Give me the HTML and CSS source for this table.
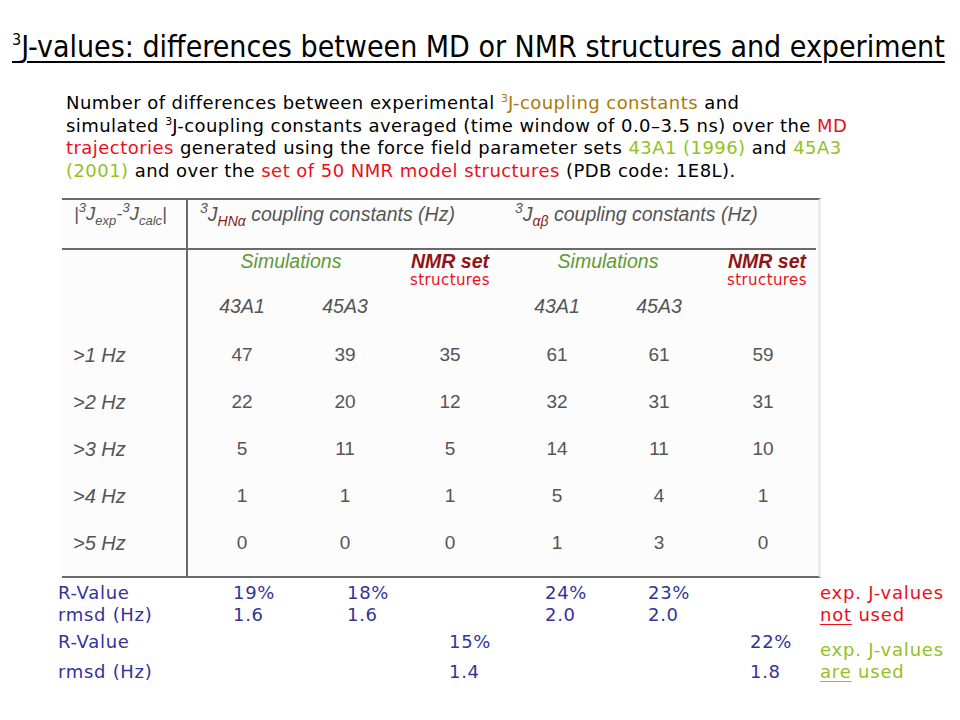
FILE: index.html
```html
<!DOCTYPE html>
<html>
<head>
<meta charset="utf-8">
<link rel="stylesheet" href="styles.css">
</head>
<body>
<div class="slide">
  <h1 class="title"><span class="title-text"><sup class="tsup">3</sup>J-values: differences between MD or NMR structures and experiment</span></h1>
  <p class="intro">Number of differences between experimental <span class="gold"><sup class="psup">3</sup>J-coupling constants</span> and<br>simulated <sup class="psup">3</sup>J-coupling constants averaged (time window of 0.0–3.5 ns) over the <span class="red">MD<br>trajectories</span> generated using the force field parameter sets <span class="green">43A1 (1996)</span> and <span class="green">45A3<br>(2001)</span> and over the <span class="red">set of 50 NMR model structures</span> (PDB code: 1E8L).</p>

  <div class="table">
    <div class="c lab hdr1 left"><span>|<sup>3</sup>J<sub>exp</sub>-<sup>3</sup>J<sub>calc</sub>|</span></div>
    <div class="c hdr1 span3 pad1"><span><sup>3</sup>J<sub class="dr">HNα</sub> coupling constants (Hz)</span></div>
    <div class="c hdr1 span3 pad2"><span><sup>3</sup>J<sub class="dr">αβ</sub> coupling constants (Hz)</span></div>

    <div class="c lab rows2"></div>
    <div class="c span2 sim">Simulations</div>
    <div class="c nmr"><span class="nmrset">NMR set</span><span class="struct">structures</span></div>
    <div class="c span2 sim">Simulations</div>
    <div class="c nmr nmr2"><span class="nmrset">NMR set</span><span class="struct">structures</span></div>

    <div class="c ff">43A1</div><div class="c ff">45A3</div><div class="c"></div>
    <div class="c ff">43A1</div><div class="c ff">45A3</div><div class="c"></div>

    <div class="c lab rl">&gt;1 Hz</div><div class="c n">47</div><div class="c n">39</div><div class="c n">35</div><div class="c n">61</div><div class="c n">61</div><div class="c n">59</div>
    <div class="c lab rl">&gt;2 Hz</div><div class="c n">22</div><div class="c n">20</div><div class="c n">12</div><div class="c n">32</div><div class="c n">31</div><div class="c n">31</div>
    <div class="c lab rl">&gt;3 Hz</div><div class="c n">5</div><div class="c n">11</div><div class="c n">5</div><div class="c n">14</div><div class="c n">11</div><div class="c n">10</div>
    <div class="c lab rl">&gt;4 Hz</div><div class="c n">1</div><div class="c n">1</div><div class="c n">1</div><div class="c n">5</div><div class="c n">4</div><div class="c n">1</div>
    <div class="c lab rl last">&gt;5 Hz</div><div class="c n last">0</div><div class="c n last">0</div><div class="c n last">0</div><div class="c n last">1</div><div class="c n last">3</div><div class="c n last">0</div>
  </div>

  <div class="stats">
    <div class="s r1 k">R-Value</div><div class="s r1 c1">19%</div><div class="s r1 c2">18%</div><div class="s r1 c4">24%</div><div class="s r1 c5">23%</div>
    <div class="note red r12">exp. J-values<br><u>not</u> used</div>
    <div class="s r2 k">rmsd (Hz)</div><div class="s r2 c1">1.6</div><div class="s r2 c2">1.6</div><div class="s r2 c4">2.0</div><div class="s r2 c5">2.0</div>
    <div class="s r3 k">R-Value</div><div class="s r3 c3">15%</div><div class="s r3 c6">22%</div>
    <div class="note green r34">exp. J-values<br><u>are</u> used</div>
    <div class="s r4 k">rmsd (Hz)</div><div class="s r4 c3">1.4</div><div class="s r4 c6">1.8</div>
  </div>
</div>
</body>
</html>
```
FILE: styles.css
```css
html, body { margin: 0; padding: 0; background: #fff; }
.slide { width: 960px; height: 720px; overflow: hidden; font-family: "DejaVu Sans", Verdana, sans-serif; color: #000; }

.title { margin: 0; padding: 30px 0 0 12px; font-weight: normal; font-size: 30px; line-height: 34px; white-space: nowrap; font-family: "DejaVu Sans Condensed", "DejaVu Sans", sans-serif; }
.title-text { text-decoration: underline; text-decoration-thickness: 2px; text-underline-offset: 4px; }
.tsup { font-size: 16px; vertical-align: 12px; line-height: 0; }

.intro { margin: 28px 0 0 66px; font-size: 18px; letter-spacing: 0.45px; line-height: 22.7px; white-space: nowrap; }
.psup { font-size: 11px; vertical-align: 7px; line-height: 0; letter-spacing: 0; }
.gold { color: #a97a06; }
.red { color: #e8101a; }
.green { color: #93c11f; }

.table { margin: 15px 0 0 62px; width: 756px; display: grid; grid-template-columns: 126px 108px 98px 112px 102px 102px 106px;
  grid-template-rows: 50px 36px 46px 47px 47px 47px 47px 56px;
  border-top: 2px solid #6a6a6a; border-bottom: 2px solid #6a6a6a; border-right: 3px solid #ececec; background: #fcfcfc;
  font-family: "Liberation Sans", Arial, sans-serif; color: #555; }
.c { display: flex; align-items: center; justify-content: center; font-size: 19px; white-space: nowrap; }
.lab { border-right: 2px solid #6a6a6a; }
.hdr1 { border-bottom: 2px solid #6a6a6a; align-items: flex-start; padding-top: 2px; font-style: italic; font-size: 19.5px; line-height: 24px; }
.left { justify-content: flex-start; padding-left: 12px; font-size: 18.5px; }
.hdr1 sup { font-size: 14px; vertical-align: 8px; line-height: 0; }
.hdr1 sub { font-size: 14px; vertical-align: -5px; line-height: 0; }
.left sup, .left sub { font-size: 13px; }
.span3 { grid-column: span 3; justify-content: flex-start; }
.span2 { grid-column: span 2; }
.pad1 { padding-left: 12px; }
.pad2 { padding-left: 9px; }
.dr { color: #8b1a1a; }
.rows2 { grid-row: span 2; }
.sim { align-items: flex-start; color: #5f9a35; font-style: italic; font-size: 19.5px; line-height: 22px; }
.nmr { flex-direction: column; justify-content: flex-start; align-items: center; line-height: 20px; }
.nmrset { color: #8d1616; font-style: italic; font-weight: bold; font-size: 19.5px; line-height: 22px; }
.struct { color: #e8101a; font-family: "DejaVu Sans", Verdana, sans-serif; font-size: 15px; letter-spacing: 0.4px; line-height: 16px; }
.nmr2 { padding-left: 8px; }
.ff { font-style: italic; font-size: 19.5px; align-items: flex-start; padding-top: 9px; }
.rl { justify-content: flex-start; padding-left: 11px; font-style: italic; font-size: 20px; }
.n { font-size: 19px; }
.last { align-items: flex-start; padding-top: 12px; }

.stats { display: grid; padding-left: 58px; grid-template-columns: 175px 114px 102px 96px 103px 102px 70px 140px;
  grid-template-rows: 22px 22px 27px 30px; margin-top: 4px; color: #333399; font-size: 18px; letter-spacing: 0.7px; }
.s { line-height: 22px; white-space: nowrap; }
.r1 { grid-row: 1; } .r2 { grid-row: 2; } .r3 { grid-row: 3; align-self: end; } .r4 { grid-row: 4; align-self: end; }
.k { grid-column: 1; }
.c1 { grid-column: 2; } .c2 { grid-column: 3; } .c3 { grid-column: 4; } .c4 { grid-column: 5; } .c5 { grid-column: 6; } .c6 { grid-column: 7; }
.note { grid-column: 8; line-height: 22px; white-space: nowrap; letter-spacing: 0.8px; }
.r12 { grid-row: 1 / span 2; }
.r34 { grid-row: 3 / span 2; align-self: end; }
.note u { text-underline-offset: 3px; }
```
